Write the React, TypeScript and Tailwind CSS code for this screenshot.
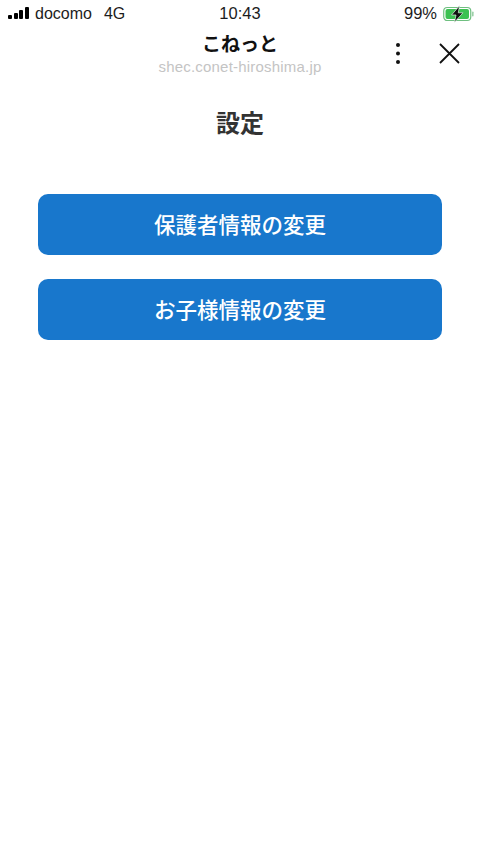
import { FunctionComponent, JSX } from "react";

const FONT = "font-['Noto_Sans_CJK_JP','Liberation_Sans',sans-serif]";

const StatusBar: FunctionComponent = (): JSX.Element => {
  return (
    <div className="relative w-full h-[27px] flex flex-row items-center justify-between pl-2 pr-[6px] text-[16px] text-[#1c1c1c] font-['Liberation_Sans',sans-serif]">
      <div className="flex flex-row items-center">
        <div className="flex flex-row items-end gap-[1.5px] h-[12px] mb-[1px]">
          <div className="w-[4px] h-[4px] bg-black rounded-[1px]" />
          <div className="w-[4px] h-[6px] bg-black rounded-[1px]" />
          <div className="w-[4px] h-[9px] bg-black rounded-[1px]" />
          <div className="w-[4.5px] h-[12px] bg-black rounded-[1px]" />
        </div>
        <span className="ml-[6px]">docomo</span>
        <span className="ml-3">4G</span>
      </div>
      <div className="absolute left-0 right-0 text-center text-[16.5px] font-medium">10:43</div>
      <div className="flex flex-row items-center">
        <span className="text-[16.5px]">99%</span>
        <svg className="ml-[6px]" width="31" height="18" viewBox="0 0 31 18">
          <rect x="0.75" y="2.5" width="27" height="13" rx="3.5" fill="none" stroke="#6fbf80" strokeWidth="1.2" />
          <rect x="2.5" y="4" width="23.5" height="10" rx="2" fill="#3cc152" />
          <rect x="29" y="6.5" width="1.6" height="5" rx="0.8" fill="#9ccfa8" />
          <path d="M16.5 0.8 L8.5 10 H13 L11.5 17.2 L20 7.8 H15.3 Z" fill="#111" stroke="#dff3e3" strokeWidth="0.7" />
        </svg>
      </div>
    </div>
  );
};

const Header: FunctionComponent = (): JSX.Element => {
  return (
    <div className="relative w-full h-[54px] flex flex-col items-center">
      <div className={`mt-[3px] h-[26px] leading-[26px] text-[19px] font-bold text-[#111] ${FONT}`}>こねっと</div>
      <div className="mt-[2px] h-[18px] leading-[18px] text-[15px] tracking-[0.2px] text-[#c4c4c4] font-['Liberation_Sans',sans-serif]">
        shec.conet-hiroshima.jp
      </div>
      <div className="absolute right-[19px] top-[3px] flex flex-row items-center gap-[36px] h-[46px]">
        <svg width="6" height="24" viewBox="0 0 6 24">
          <circle cx="3" cy="4" r="2" fill="#111" />
          <circle cx="3" cy="12.5" r="2" fill="#111" />
          <circle cx="3" cy="21" r="2" fill="#111" />
        </svg>
        <svg width="24" height="24" viewBox="0 0 24 24">
          <path d="M3 3 L22 22 M22 3 L3 22" stroke="#111" strokeWidth="1.8" fill="none" />
        </svg>
      </div>
    </div>
  );
};

const ActionButton: FunctionComponent<{ label: string }> = ({ label }): JSX.Element => {
  return (
    <button className={`w-full h-[61px] rounded-[10px] bg-[#1877cc] text-white text-[21.5px] font-medium flex items-center justify-center ${FONT}`}>
      {label}
    </button>
  );
};

export default function App(): JSX.Element {
  return (
    <div className="w-full min-h-[853px] bg-white flex flex-col">
      <StatusBar />
      <Header />
      <div className="flex flex-col items-center px-[38px]">
        <h1 className={`mt-[24px] h-[34px] leading-[34px] text-[24px] font-bold text-[#333] ${FONT}`}>設定</h1>
        <div className="w-full mt-[55px] flex flex-col gap-[24px]">
          <ActionButton label="保護者情報の変更" />
          <ActionButton label="お子様情報の変更" />
        </div>
      </div>
    </div>
  );
}
